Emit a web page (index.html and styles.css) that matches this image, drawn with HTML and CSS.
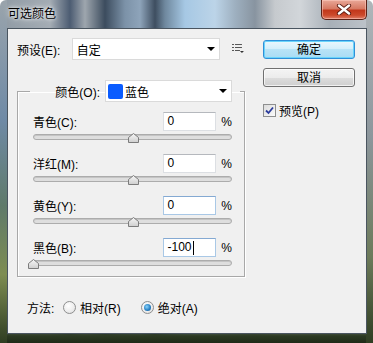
FILE: index.html
```html
<!DOCTYPE html>
<html lang="zh-CN">
<head>
    <meta charset="UTF-8">
    <meta name="viewport" content="width=device-width, initial-scale=1.0">
    <title>可选颜色</title>
    <link rel="stylesheet" href="styles.css">
</head>
<body>
    <svg width="0" height="0" class="defs">
        <defs>
            <linearGradient id="thumbFill" x1="0" y1="0" x2="0" y2="1">
                <stop offset="0" stop-color="#f6f6f6"/>
                <stop offset="1" stop-color="#cfcfcf"/>
            </linearGradient>
        </defs>
    </svg>
    <div class="window">
        <div class="titlebar">
            <span class="title">可选颜色</span>
            <div class="close">
                <svg width="16" height="11" viewBox="0 0 16 11">
                    <path d="M3 1.5 L13 9.5 M13 1.5 L3 9.5" stroke="#5a1a10" stroke-width="4.2" stroke-linecap="round"/>
                    <path d="M3 1.5 L13 9.5 M13 1.5 L3 9.5" stroke="#fff" stroke-width="2.4" stroke-linecap="round"/>
                </svg>
            </div>
        </div>

        <div class="client">
            <div class="main">
                <div class="preset-row">
                    <span class="preset-label">预设(E):</span>
                    <div class="combo preset-combo">
                        <span class="combo-text">自定</span>
                        <span class="arrow"></span>
                    </div>
                    <svg class="menu-icon" width="13" height="12" viewBox="0 0 13 12">
                        <rect x="0" y="1" width="2" height="1" fill="#555"/>
                        <rect x="3" y="1" width="7" height="1" fill="#555"/>
                        <rect x="0" y="4" width="2" height="1" fill="#555"/>
                        <rect x="3" y="4" width="7" height="1" fill="#555"/>
                        <rect x="0" y="7" width="2" height="1" fill="#555"/>
                        <rect x="3" y="7" width="5" height="1" fill="#555"/>
                        <path d="M8 8 L12 8 L10 10 Z" fill="#333"/>
                    </svg>
                </div>

                <fieldset class="group">
                    <legend class="group-legend">
                        <span>颜色(O):</span>
                        <div class="combo color-combo">
                            <span class="swatch"></span>
                            <span class="combo-text">蓝色</span>
                            <span class="arrow"></span>
                        </div>
                    </legend>

                    <div class="channel">
                        <div class="channel-head">
                            <span class="channel-name">青色(C):</span>
                            <span class="num">0</span>
                            <span class="pct">%</span>
                        </div>
                        <div class="slider">
                            <svg class="thumb" style="left: 50%" width="11" height="10" viewBox="0 0 11 10"><path d="M5.5 0.5 L10.5 4.5 L10.5 9.5 L0.5 9.5 L0.5 4.5 Z" fill="url(#thumbFill)" stroke="#7c7c7c"/></svg>
                        </div>
                    </div>
                    <div class="channel">
                        <div class="channel-head">
                            <span class="channel-name">洋红(M):</span>
                            <span class="num">0</span>
                            <span class="pct">%</span>
                        </div>
                        <div class="slider">
                            <svg class="thumb" style="left: 50%" width="11" height="10" viewBox="0 0 11 10"><path d="M5.5 0.5 L10.5 4.5 L10.5 9.5 L0.5 9.5 L0.5 4.5 Z" fill="url(#thumbFill)" stroke="#7c7c7c"/></svg>
                        </div>
                    </div>
                    <div class="channel">
                        <div class="channel-head">
                            <span class="channel-name">黄色(Y):</span>
                            <span class="num num-hover">0</span>
                            <span class="pct">%</span>
                        </div>
                        <div class="slider">
                            <svg class="thumb" style="left: 50%" width="11" height="10" viewBox="0 0 11 10"><path d="M5.5 0.5 L10.5 4.5 L10.5 9.5 L0.5 9.5 L0.5 4.5 Z" fill="url(#thumbFill)" stroke="#7c7c7c"/></svg>
                        </div>
                    </div>
                    <div class="channel">
                        <div class="channel-head">
                            <span class="channel-name">黑色(B):</span>
                            <span class="num num-hover">-100<span class="caret"></span></span>
                            <span class="pct">%</span>
                        </div>
                        <div class="slider">
                            <svg class="thumb" style="left: 0%" width="11" height="10" viewBox="0 0 11 10"><path d="M5.5 0.5 L10.5 4.5 L10.5 9.5 L0.5 9.5 L0.5 4.5 Z" fill="url(#thumbFill)" stroke="#7c7c7c"/></svg>
                        </div>
                    </div>
                </fieldset>

                <div class="method">
                    <span class="method-label">方法:</span>
                    <span class="radio"></span>
                    <span class="radio-text">相对(R)</span>
                    <span class="radio radio-on"></span>
                    <span class="radio-text">绝对(A)</span>
                </div>
            </div>

            <div class="side">
                <div class="btn btn-default">确定</div>
                <div class="btn">取消</div>
                <div class="check-row">
                    <span class="checkbox">
                        <svg width="9" height="9" viewBox="0 0 9 9">
                            <path d="M1 4.5 L3.5 7 L8 1.5" stroke="#2b3c9c" stroke-width="1.8" fill="none"/>
                        </svg>
                    </span>
                    <span>预览(P)</span>
                </div>
            </div>
        </div>
    </div>
</body>
</html>
```

FILE: styles.css
```css
body {
    margin: 0;
    font-family: "Liberation Sans", "Noto Sans CJK SC", sans-serif;
    font-size: 12px;
    color: #000;
}
.defs {
    position: absolute;
}
.window {
    width: 373px;
    height: 343px;
    box-sizing: border-box;
    border-radius: 6px 6px 0 0;
    background:
        linear-gradient(to bottom, #9aa4ac 0%, #6f8aa6 35%, #5f7a6a 60%, #7e8d52 80%, #2f3d22 100%) left top / 7px 100% no-repeat,
        linear-gradient(to bottom, #b0b6ba 0%, #8c969c 40%, #6c7a5a 75%, #2f3d22 100%) right top / 7px 100% no-repeat,
        linear-gradient(to bottom, rgba(40, 55, 30, 0) 0, rgba(40, 55, 30, 0) 320px, #2c3a22 336px, #1f2a18 343px),
        linear-gradient(to right, #8f9aa4 0, #a4acb4 50px, #4c5c72 70px, #9ea6ae 85px, #3c4c5e 105px, #7c92a8 125px, #8ea4ba 140px, #3e4e60 155px, #6f889e 165px, #a6c8e4 185px, #bcd4e8 215px, #9eb0c0 235px, #8894a0 255px, #c6cace 275px, #d2d6da 300px, #a8b0b8 330px, #c0c6cc 373px);
    padding: 0 6px 0 7px;
}
.titlebar {
    height: 28px;
    display: flex;
    justify-content: space-between;
    align-items: flex-start;
}
.title {
    margin-top: 6px;
    margin-left: 1px;
    line-height: 16px;
    text-shadow: 0 0 6px #fff, 0 0 3px rgba(255, 255, 255, 0.9);
}
.close {
    width: 46px;
    height: 20px;
    box-sizing: border-box;
    border: 1px solid #5c2218;
    border-top: none;
    border-radius: 0 0 5px 5px;
    background: linear-gradient(to bottom, #e9a898 0%, #d77a64 45%, #c2381c 55%, #cc4a2c 80%, #e0806a 100%);
    box-shadow: inset 0 0 0 1px rgba(255, 210, 200, 0.5);
    display: flex;
    justify-content: center;
    align-items: center;
}
.client {
    height: 306px;
    box-sizing: border-box;
    background: #f0f0f0;
    border: 1px solid #4a5560;
    padding: 9px 0 0 9px;
    display: flex;
}
.main {
    width: 228px;
}
.preset-row {
    height: 22px;
    display: flex;
    align-items: center;
}
.preset-label {
    width: 55px;
}
.combo {
    height: 22px;
    box-sizing: border-box;
    background: #fff;
    border: 1px solid #dadada;
    display: flex;
    align-items: center;
    position: relative;
}
.combo-text {
    margin-left: 4px;
}
.preset-combo {
    width: 149px;
}
.arrow {
    position: absolute;
    right: 4px;
    top: 8px;
    width: 0;
    height: 0;
    border-left: 4px solid transparent;
    border-right: 4px solid transparent;
    border-top: 4px solid #000;
}
.menu-icon {
    margin-left: 12px;
}
.group {
    margin: 20px 0 0;
    padding: 0 4px 7px 12px;
    min-width: 0;
    border: 1px solid #a8a8a8;
    box-shadow: 1px 1px 0 #fff, inset 1px 1px 0 #fff;
}
.group-legend {
    padding: 0 8px 0 0;
    width: 210px;
    box-sizing: border-box;
    display: flex;
    justify-content: flex-end;
    align-items: center;
    gap: 5px;
}
.color-combo {
    width: 127px;
}
.swatch {
    width: 15px;
    height: 15px;
    margin-left: 2px;
    background: #0a5cff;
    border-radius: 2px;
}
.color-combo .combo-text {
    margin-left: 2px;
}
.channel {
    margin: 11px 8px 0 3px;
}
.channel:first-of-type {
    margin-top: 10px;
}
.channel-head {
    height: 19px;
    display: flex;
    align-items: center;
}
.channel-name {
    width: 130px;
}
.num {
    width: 54px;
    height: 19px;
    box-sizing: border-box;
    background: #fff;
    border: 1px solid #dcdfe3;
    border-top-color: #b5b8bd;
    padding-left: 4px;
    line-height: 17px;
    display: flex;
    align-items: center;
}
.num-hover {
    border-color: #a9c8e6;
    border-top-color: #84a9d2;
}
.caret {
    width: 1px;
    height: 14px;
    background: #000;
    margin-left: 1px;
}
.pct {
    margin-left: 5px;
}
.slider {
    height: 12px;
    position: relative;
    display: flex;
    align-items: center;
}
.slider::before {
    content: "";
    flex: 1;
    height: 4px;
    border: 1px solid #acacac;
    border-radius: 3px;
    background: #dedede;
    box-shadow: inset 0 1px 0 #c4c4c4;
}
.thumb {
    position: absolute;
    top: 2px;
    margin-left: -5px;
}
.method {
    margin-top: 22px;
    padding-left: 10px;
    height: 16px;
    display: flex;
    align-items: center;
}
.method-label {
    width: 36px;
}
.radio {
    width: 13px;
    height: 13px;
    box-sizing: border-box;
    border: 1px solid #8e8f8f;
    border-radius: 50%;
    background: radial-gradient(circle at 40% 35%, #fff 0, #ececec 60%, #d6d6d6 100%);
    display: flex;
    justify-content: center;
    align-items: center;
}
.radio-on::after {
    content: "";
    width: 7px;
    height: 7px;
    border-radius: 50%;
    background: radial-gradient(circle at 40% 40%, #8cd5fb 0, #2a83c6 55%, #0c4e8c 100%);
}
.radio-text {
    margin-left: 4px;
    margin-right: 20px;
}
.side {
    margin-left: 18px;
    width: 92px;
}
.btn {
    height: 19px;
    margin-top: 9px;
    box-sizing: border-box;
    border: 1px solid #707070;
    border-radius: 3px;
    background: linear-gradient(to bottom, #f4f4f4 0, #ececec 50%, #dddddd 50%, #cfcfcf 100%);
    box-shadow: inset 0 0 0 1px rgba(255, 255, 255, 0.7);
    display: flex;
    justify-content: center;
    align-items: center;
    line-height: 16px;
}
.btn-default {
    margin-top: 2px;
    border-color: #2f8fd8;
    background: linear-gradient(to bottom, #eaf7fd 0, #d2eefb 50%, #b8e3f7 50%, #a9dcf4 100%);
    box-shadow: inset 0 0 0 1px #6ad4fb;
}
.check-row {
    margin-top: 15px;
    display: flex;
    align-items: center;
    gap: 3px;
}
.checkbox {
    width: 13px;
    height: 13px;
    box-sizing: border-box;
    border: 1px solid #8e8f8f;
    background: linear-gradient(135deg, #dcdcdc, #fbfbfb);
    display: flex;
    justify-content: center;
    align-items: center;
}
```
